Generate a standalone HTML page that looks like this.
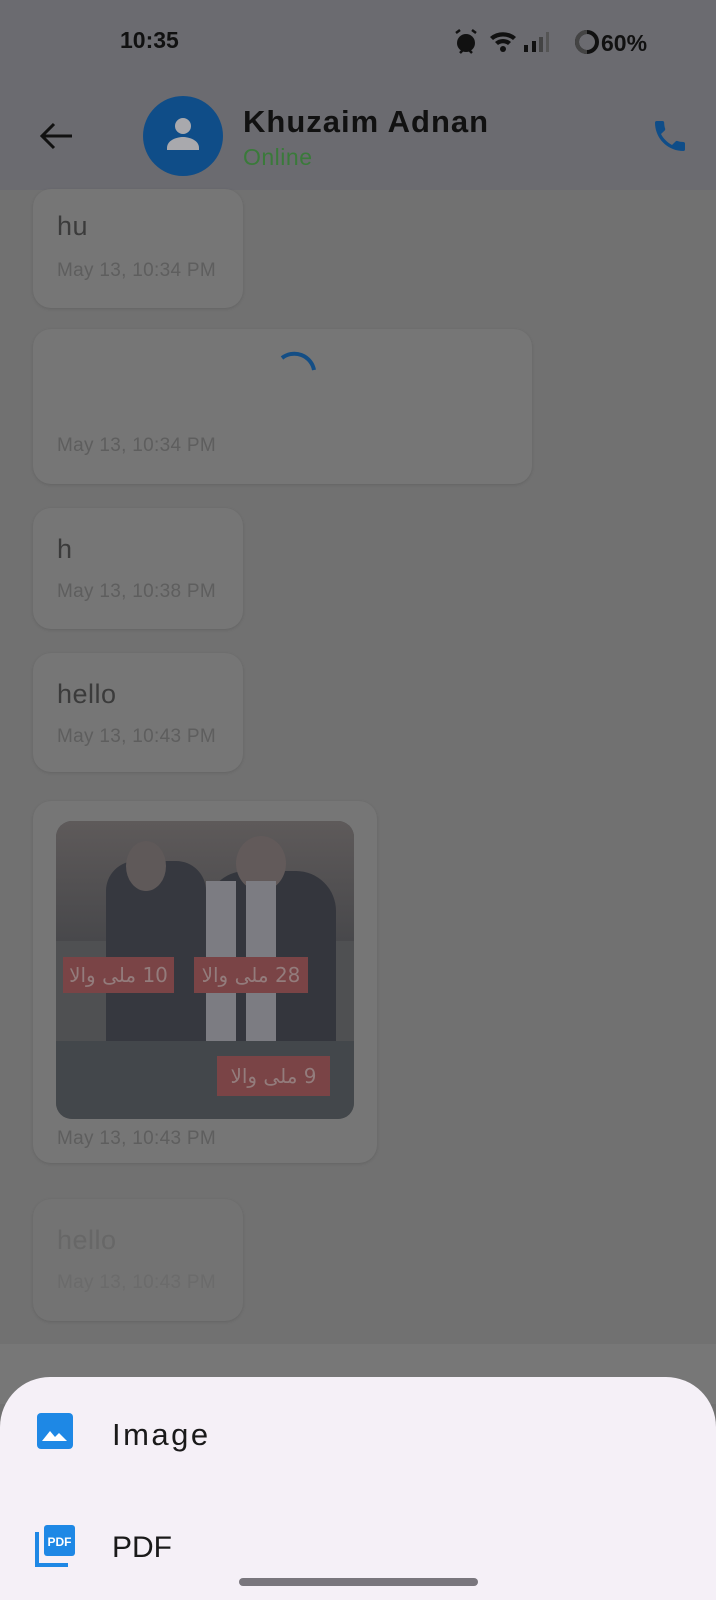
<!DOCTYPE html>
<html><head><meta charset="utf-8"><style>
*{margin:0;padding:0;box-sizing:border-box}
body{width:716px;height:1600px;overflow:hidden;background:#717171;font-family:"Liberation Sans","DejaVu Sans",sans-serif;position:relative}
.abs{position:absolute}
.bar{left:0;top:0;width:716px;height:190px;background:#6b6b70}
.b{position:absolute;background:#767676;border-radius:18px;box-shadow:0 1px 3px rgba(0,0,0,.12)}
.t{position:absolute;left:24px;color:#3b3b3b;font-size:27px;letter-spacing:.5px}
.d{position:absolute;left:24px;color:#5e5e5e;font-size:19px;letter-spacing:.3px}
.lbl{position:absolute;background:#7a4446;color:#937c7c;font-size:20px;font-family:"DejaVu Sans",sans-serif;height:36px;line-height:36px;text-align:center;direction:rtl}
</style></head><body>
<div class="abs bar"></div>
<div class="abs" style="left:120px;top:27px;font-size:23px;font-weight:bold;color:#111">10:35</div>
<svg class="abs" style="left:452px;top:27px" width="216" height="30" viewBox="0 0 216 30">
<circle cx="14" cy="16" r="9" fill="#111"/><path d="M4 6l4-3M24 6l-4-3" stroke="#111" stroke-width="2.5"/><path d="M8 26l3-3M20 26l-3-3" stroke="#111" stroke-width="2.5"/>
<path d="M38 10a20 20 0 0 1 26 0l-3 3a16 16 0 0 0-20 0z M43 15a12 12 0 0 1 16 0l-3 3a8 8 0 0 0-10 0z" fill="#111"/><circle cx="51" cy="22" r="3" fill="#111"/>
<rect x="72" y="18" width="4" height="7" fill="#111"/><rect x="80" y="14" width="4" height="11" fill="#111"/><rect x="87" y="10" width="4" height="15" fill="#444"/><rect x="94" y="5" width="3" height="20" fill="#555"/>
<circle cx="135" cy="15" r="10" fill="none" stroke="#111" stroke-width="4"/><path d="M135 5a10 10 0 0 0 0 20" stroke="#444" stroke-width="4" fill="none"/>
<text x="149" y="24" font-size="23" font-weight="bold" fill="#111" font-family="Liberation Sans">60%</text>
</svg>
<svg class="abs" style="left:38px;top:121px" width="36" height="30" viewBox="0 0 36 30"><path d="M34 15H4M16 3L4 15l12 12" stroke="#111" stroke-width="3" fill="none"/></svg>
<div class="abs" style="left:143px;top:96px;width:80px;height:80px;border-radius:50%;background:#0f4d88"></div>
<svg class="abs" style="left:165px;top:116px" width="36" height="40" viewBox="0 0 36 40"><circle cx="18" cy="10" r="8" fill="#a9a9ad"/><path d="M2 32c0-8 10-11 16-11s16 3 16 11v2H2z" fill="#a9a9ad"/></svg>
<div class="abs" style="left:243px;top:104px;font-size:31px;font-weight:bold;color:#111;letter-spacing:1px">Khuzaim Adnan</div>
<div class="abs" style="left:243px;top:144px;font-size:23px;color:#3a7a3a;letter-spacing:.5px">Online</div>
<svg class="abs" style="left:650px;top:116px" width="40" height="40" viewBox="0 0 24 24"><path d="M6.6 10.8c1.4 2.8 3.8 5.1 6.6 6.6l2.2-2.2c.3-.3.7-.4 1-.2 1.1.4 2.3.6 3.6.6.6 0 1 .4 1 1V20c0 .6-.4 1-1 1C10.6 21 3 13.4 3 4c0-.6.4-1 1-1h3.5c.6 0 1 .4 1 1 0 1.3.2 2.5.6 3.6.1.3 0 .7-.2 1z" fill="#0f4d88"/></svg>

<div class="b" style="left:33px;top:189px;width:210px;height:119px"><div class="t" style="top:22px">hu</div><div class="d" style="top:71px">May 13, 10:34 PM</div></div>
<div class="b" style="left:33px;top:329px;width:499px;height:155px"><div class="d" style="top:106px">May 13, 10:34 PM</div></div>
<svg class="abs" style="left:278px;top:350px" width="44" height="30" viewBox="0 0 44 30"><path d="M4 8a20 20 0 0 1 32 12" stroke="#144e85" stroke-width="4" fill="none"/></svg>
<div class="b" style="left:33px;top:508px;width:210px;height:121px"><div class="t" style="top:26px">h</div><div class="d" style="top:73px">May 13, 10:38 PM</div></div>
<div class="b" style="left:33px;top:653px;width:210px;height:119px"><div class="t" style="top:26px">hello</div><div class="d" style="top:73px">May 13, 10:43 PM</div></div>
<div class="b" style="left:33px;top:801px;width:344px;height:362px"><div class="d" style="top:327px">May 13, 10:43 PM</div></div>
<div class="abs" style="left:56px;top:821px;width:298px;height:298px;border-radius:16px;overflow:hidden;background:#4f5052">
 <div class="abs" style="left:0;top:0;width:298px;height:120px;background:linear-gradient(#5e5a5a,#48484b)"></div>
 <div class="abs" style="left:50px;top:40px;width:100px;height:240px;background:#36383f;border-radius:30px 30px 0 0"></div>
 <div class="abs" style="left:70px;top:20px;width:40px;height:50px;background:#5f5959;border-radius:50%"></div>
 <div class="abs" style="left:150px;top:50px;width:130px;height:240px;background:#34363d;border-radius:40px 40px 0 0"></div>
 <div class="abs" style="left:180px;top:15px;width:50px;height:55px;background:#625a5a;border-radius:50%"></div>
 <div class="abs" style="left:150px;top:60px;width:30px;height:190px;background:#7c7c82"></div>
 <div class="abs" style="left:190px;top:60px;width:30px;height:190px;background:#7c7c82"></div>
 <div class="abs" style="left:0;top:220px;width:298px;height:78px;background:#43474b"></div>
 <div class="lbl" style="left:7px;top:136px;width:111px">10 ملی والا</div>
 <div class="lbl" style="left:138px;top:136px;width:114px">28 ملی والا</div>
 <div class="lbl" style="left:161px;top:235px;width:113px;height:40px;line-height:40px">9 ملی والا</div>
</div>
<div class="b" style="left:33px;top:1199px;width:210px;height:122px;background:#737373"><div class="t" style="top:26px;color:#676767">hello</div><div class="d" style="top:73px;color:#6b6b6b">May 13, 10:43 PM</div></div>
<div class="abs" style="left:0;top:1344px;width:716px;height:60px;background:#777"></div>
<div class="abs" style="left:0;top:1377px;width:716px;height:223px;background:#f5f0f7;border-radius:50px 50px 0 0"></div>
<svg class="abs" style="left:37px;top:1413px" width="38" height="38" viewBox="0 0 38 38"><rect x="0" y="0" width="36" height="36" rx="4" fill="#1e88e5"/><path d="M5 28l8-10 5 6 4-4 8 8z" fill="#fff"/></svg>
<div class="abs" style="left:112px;top:1417px;font-size:31px;color:#1a1a1a;letter-spacing:2.5px">Image</div>
<svg class="abs" style="left:35px;top:1525px" width="42" height="42" viewBox="0 0 42 42"><path d="M2 7v33h31" stroke="#1e88e5" stroke-width="4" fill="none"/><rect x="9" y="0" width="31" height="31" rx="3" fill="#1e88e5"/><text x="24.5" y="21" font-size="12" font-weight="bold" fill="#fff" text-anchor="middle" font-family="Liberation Sans">PDF</text></svg>
<div class="abs" style="left:112px;top:1531px;font-size:30px;color:#1a1a1a">PDF</div>
<div class="abs" style="left:239px;top:1578px;width:239px;height:8px;border-radius:4px;background:#79767d"></div>
</body></html>
